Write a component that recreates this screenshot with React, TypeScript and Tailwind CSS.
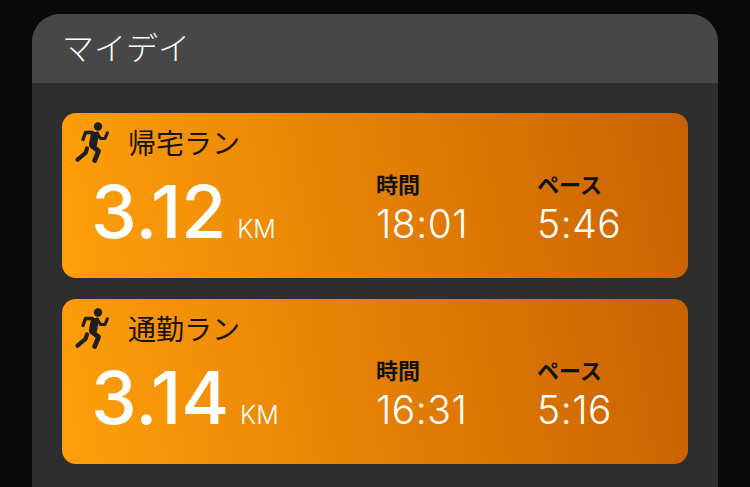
interface Run {
  title: string;
  distance: string;
  time: string;
  pace: string;
}

const runs: Run[] = [
  { title: '帰宅ラン', distance: '3.12', time: '18:01', pace: '5:46' },
  { title: '通勤ラン', distance: '3.14', time: '16:31', pace: '5:16' },
];

const RunnerIcon = () => (
  <svg width="42" height="50" viewBox="72 118 42 50" className="shrink-0" fill="none" stroke="#1f1f1f" strokeLinecap="round" strokeLinejoin="round">
    <circle cx="98" cy="126.5" r="4.2" fill="#1f1f1f" stroke="none" />
    <path d="M92.5 132.5 L85.5 132.5 L83 139.5" strokeWidth="3.4" />
    <path d="M97 133 L100.5 138.5 L105 138.5 L107.3 133" strokeWidth="3.2" />
    <path d="M92 133 L98 133 L96 145 L90 144 Z" fill="#1f1f1f" strokeWidth="2" />
    <path d="M91.5 145.5 L98.5 151 L94.7 160.5" strokeWidth="4.8" />
    <path d="M87 148.5 L85.5 153 L77.5 159.7" strokeWidth="4.2" />
  </svg>
);

const Stat = ({ label, value, className }: { label: string; value: string; className: string }) => (
  <div className={`flex flex-col ${className}`}>
    <span className="text-[22px] leading-[26px] font-bold text-[#111]">{label}</span>
    <span className="text-[39px] leading-[52px] font-light tracking-[0.5px] text-white">{value}</span>
  </div>
);

const RunCard = ({ run }: { run: Run }) => (
  <div className="h-[165px] rounded-[14px] bg-[linear-gradient(80deg,#ff9f0a,#c96100)] pl-[10px] pt-[5px]">
    <div className="flex h-[50px] items-center">
      <RunnerIcon />
      <span className="ml-[14px] pt-[2px] text-[28px] leading-none text-[#1a1206]">{run.title}</span>
    </div>
    <div className="mt-[4px] flex items-start pl-[19px]">
      <div className="flex w-[285px] items-baseline pt-[1px]">
        <span className="text-[73px] leading-[78px] font-medium text-white">{run.distance}</span>
        <span className="ml-[11px] text-[25px] font-light text-white">KM</span>
      </div>
      <Stat label="時間" value={run.time} className="w-[161px]" />
      <Stat label="ペース" value={run.pace} className="" />
    </div>
  </div>
);

export default function App() {
  return (
    <div className="h-[487px] w-[750px] overflow-hidden bg-[#0a0a0a] px-[32px] pt-[14px] font-['Inter','Noto_Sans_CJK_JP',sans-serif]">
      <div className="h-[473px] rounded-t-[28px] bg-[#2e2e2e]">
        <div className="flex h-[69px] items-center rounded-t-[28px] bg-[#474747] pl-[30px] text-[32px] font-light text-white">
          マイデイ
        </div>
        <div className="flex flex-col gap-[21px] px-[30px] pt-[30px]">
          {runs.map((run) => (
            <RunCard key={run.title} run={run} />
          ))}
        </div>
      </div>
    </div>
  );
}
